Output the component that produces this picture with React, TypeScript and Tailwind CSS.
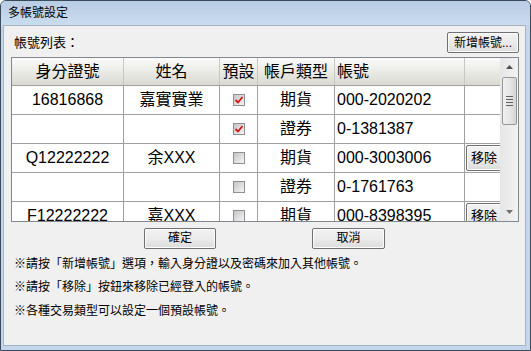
import React from 'react';

type Row = {
  id: string;
  name: string;
  checked: boolean;
  type: string;
  account: string;
  removable: boolean;
};

const rows: Row[] = [
  { id: '16816868', name: '嘉實實業', checked: true, type: '期貨', account: '000-2020202', removable: false },
  { id: '', name: '', checked: true, type: '證券', account: '0-1381387', removable: false },
  { id: 'Q12222222', name: '余XXX', checked: false, type: '期貨', account: '000-3003006', removable: true },
  { id: '', name: '', checked: false, type: '證券', account: '0-1761763', removable: false },
  { id: 'F12222222', name: '嘉XXX', checked: false, type: '期貨', account: '000-8398395', removable: true },
];

const font = "font-['Liberation_Sans','Noto_Sans_CJK_TC',sans-serif]";
const cols = 'grid grid-cols-[112px_96px_38px_77px_130px_38px]';

const CheckBox = ({ checked }: { checked: boolean }) => (
  <div className="w-[12px] h-[12px] border border-[#8e8f8f] bg-gradient-to-br from-[#c4c4c4] to-[#f6f6f6] flex items-center justify-center">
    {checked && (
      <svg width="10" height="10" viewBox="0 0 10 10">
        <path d="M1.5 5 L4 7.5 L8.5 2" fill="none" stroke="#e01010" strokeWidth="1.8" />
      </svg>
    )}
  </div>
);

const WinButton = ({ children, className = '' }: { children: React.ReactNode; className?: string }) => (
  <div
    className={`flex items-center justify-center border border-[#707070] rounded-[2px] bg-gradient-to-b from-[#f2f2f2] via-[#ebebeb] to-[#dcdcdc] text-[12px] text-black shadow-[inset_0_0_0_1px_#fcfcfc] ${className}`}
  >
    {children}
  </div>
);

export default function App() {
  return (
    <div className={`w-[531px] h-[351px] ${font} bg-[#c4d6ec] border border-[#3c4b5c] rounded-t-[6px] flex flex-col overflow-hidden`}>
      <div className="h-[24px] shrink-0 bg-gradient-to-b from-[#b8cce4] to-[#cadcf0] flex items-center pl-[7px] text-[12px] text-black">
        多帳號設定
      </div>
      <div className="flex-1 ml-[2px] mr-[4px] mb-[4px] border border-[#a6b4c4] bg-[#f0f0f0] pl-[7px] pr-[6px] pt-[6px] flex flex-col">
        <div className="h-[21px] flex items-center justify-between">
          <span className="pl-[3px] text-[13px] text-black">帳號列表：</span>
          <WinButton className="w-[72px] h-[21px]">新增帳號...</WinButton>
        </div>

        <div className="mt-[4px] h-[165px] border border-[#828790] bg-white flex overflow-hidden">
          <div className="flex-1 overflow-hidden">
            <div className={`${cols} h-[28px] bg-gradient-to-b from-[#fbfbfa] to-[#dadad2] border-b border-[#a0a0a0] text-[16px] text-black`}>
              <div className="flex items-center justify-center border-r border-[#c8c8c0]">身分證號</div>
              <div className="flex items-center justify-center border-r border-[#c8c8c0]">姓名</div>
              <div className="flex items-center justify-center border-r border-[#c8c8c0]">預設</div>
              <div className="flex items-center justify-center border-r border-[#c8c8c0]">帳戶類型</div>
              <div className="flex items-center pl-[2px] border-r border-[#c8c8c0]">帳號</div>
              <div />
            </div>
            {rows.map((r, i) => (
              <div key={i} className={`${cols} h-[29px] border-b border-[#a0a0a0] text-[16px] text-black`}>
                <div className="flex items-center justify-center border-r border-[#a0a0a0]">{r.id}</div>
                <div className="flex items-center justify-center border-r border-[#a0a0a0]">{r.name}</div>
                <div className="flex items-center justify-center border-r border-[#a0a0a0]">
                  <CheckBox checked={r.checked} />
                </div>
                <div className="flex items-center justify-center border-r border-[#a0a0a0]">{r.type}</div>
                <div className="flex items-center pl-[2px] border-r border-[#a0a0a0]">{r.account}</div>
                <div className="flex items-center justify-center px-[1px] py-[1px]">
                  {r.removable && <WinButton className="w-full h-full text-[13px]">移除</WinButton>}
                </div>
              </div>
            ))}
          </div>
          <div className="w-[18px] shrink-0 bg-gradient-to-r from-[#e6e6e6] to-[#f2f2f2] flex flex-col items-center">
            <div className="h-[18px] w-full flex items-center justify-center">
              <svg width="7" height="4" viewBox="0 0 7 4">
                <path d="M0 4 L3.5 0 L7 4 Z" fill="#505050" />
              </svg>
            </div>
            <div className="mt-[1px] w-[15px] h-[48px] border border-[#979797] rounded-[2px] bg-gradient-to-r from-[#f0f0f0] via-[#e6e6e6] to-[#d4d4d4] flex flex-col items-center justify-center gap-[2px]">
              <div className="w-[7px] h-px bg-[#606060]" />
              <div className="w-[7px] h-px bg-[#606060]" />
              <div className="w-[7px] h-px bg-[#606060]" />
              <div className="w-[7px] h-px bg-[#606060]" />
            </div>
            <div className="flex-1" />
            <div className="h-[18px] w-full flex items-center justify-center">
              <svg width="7" height="4" viewBox="0 0 7 4">
                <path d="M0 0 L7 0 L3.5 4 Z" fill="#707070" />
              </svg>
            </div>
          </div>
        </div>

        <div className="mt-[6px] h-[20px] flex items-center">
          <WinButton className="ml-[133px] w-[72px] h-[21px]">確定</WinButton>
          <WinButton className="ml-[96px] w-[73px] h-[21px]">取消</WinButton>
        </div>

        <div className="mt-[4px] pl-[3px] text-[12px] text-black">
          <div className="h-[23.5px] flex items-center">※請按「新增帳號」選項，輸入身分證以及密碼來加入其他帳號。</div>
          <div className="h-[23.5px] flex items-center">※請按「移除」按鈕來移除已經登入的帳號。</div>
          <div className="h-[23.5px] flex items-center">※各種交易類型可以設定一個預設帳號。</div>
        </div>
      </div>
    </div>
  );
}
